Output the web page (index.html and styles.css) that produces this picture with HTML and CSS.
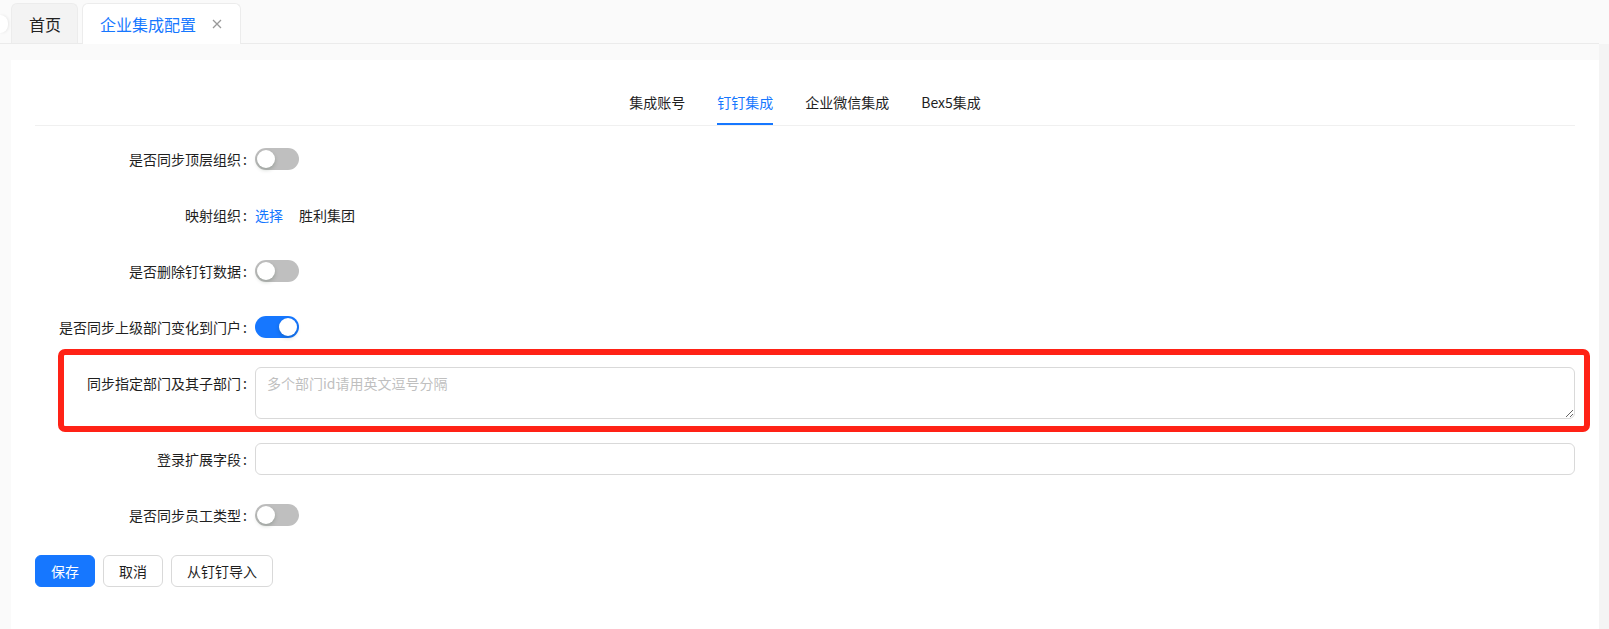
FILE: index.html
```html
<!DOCTYPE html>
<html>
    <head>
        <title>企业集成配置</title>
        <link rel="stylesheet" href="styles.css">
    </head>
    <body>
        <div class="layout">
            <div class="page">
                <div class="tabbar">
                    <span class="scroll-btn"></span>
                    <div class="page-tab">首页</div>
                    <div class="page-tab active">企业集成配置
                        <svg class="close" width="10" height="10" viewBox="0 0 10 10">
                            <path d="M1 1 L9 9 M9 1 L1 9" stroke="#999" stroke-width="1.3" fill="none"/>
                        </svg>
                    </div>
                </div>

                <div class="main">
                    <div class="card">
                        <div class="tabs">
                            <div class="tab">集成账号</div>
                            <div class="tab active">钉钉集成</div>
                            <div class="tab">企业微信集成</div>
                            <div class="tab">Bex5集成</div>
                        </div>

                        <form class="form">
                            <div class="form-item">
                                <label class="form-label">是否同步顶层组织</label>
                                <div class="form-control"><span class="switch"></span></div>
                            </div>
                            <div class="form-item">
                                <label class="form-label">映射组织</label>
                                <div class="form-control">
                                    <a class="link">选择</a>
                                    <span class="org-name">胜利集团</span>
                                </div>
                            </div>
                            <div class="form-item">
                                <label class="form-label">是否删除钉钉数据</label>
                                <div class="form-control"><span class="switch"></span></div>
                            </div>
                            <div class="form-item">
                                <label class="form-label">是否同步上级部门变化到门户</label>
                                <div class="form-control"><span class="switch on"></span></div>
                            </div>
                            <div class="form-item highlight">
                                <label class="form-label">同步指定部门及其子部门</label>
                                <div class="form-control">
                                    <textarea class="textarea" placeholder="多个部门id请用英文逗号分隔"></textarea>
                                </div>
                                <span class="annotation"></span>
                            </div>
                            <div class="form-item">
                                <label class="form-label">登录扩展字段</label>
                                <div class="form-control"><input class="input" type="text"></div>
                            </div>
                            <div class="form-item">
                                <label class="form-label">是否同步员工类型</label>
                                <div class="form-control"><span class="switch"></span></div>
                            </div>
                            <div class="actions">
                                <button type="button" class="btn primary">保存</button>
                                <button type="button" class="btn">取消</button>
                                <button type="button" class="btn">从钉钉导入</button>
                            </div>
                        </form>
                    </div>
                </div>
            </div>
            <div class="scrollbar"></div>
        </div>
    </body>
</html>
```

FILE: styles.css
```css
/* page frame */
body {
    margin: 0;
    height: 100vh;
    overflow: hidden;
    background-color: #fafafa;
    font-family: "Noto Sans CJK SC", "Noto Sans", sans-serif;
    font-size: 14px;
    color: #1f1f1f;
}

.layout {
    display: flex;
    height: 100vh;
}

.page {
    width: 1599px;
    display: flex;
    flex-direction: column;
}

.scrollbar {
    flex: 1;
    margin-top: 44px;
    background-color: #f4f4f4;
}

/* top page tabs */
.tabbar {
    height: 44px;
    box-sizing: border-box;
    padding-top: 3px;
    display: flex;
    align-items: flex-start;
    gap: 4px;
    border-bottom: 1px solid #ebebeb;
}

.scroll-btn {
    width: 8px;
    height: 18px;
    margin-top: 12px;
    margin-right: -1px;
    background-color: #fff;
    border-radius: 0 9px 9px 0;
    box-shadow: 1px 0 3px rgba(0, 0, 0, 0.08);
}

.page-tab {
    height: 40px;
    box-sizing: border-box;
    padding: 0 16px 0 17px;
    display: flex;
    align-items: center;
    font-size: 16px;
    color: #222;
    background-color: #f3f3f3;
    border: 1px solid #ececec;
    border-bottom: none;
    border-radius: 6px 6px 0 0;
}

.page-tab.active {
    background-color: #fff;
    color: #1677ff;
    padding-right: 18px;
    height: 41px;
}

.close {
    margin-left: 16px;
}

/* content card */
.main {
    flex: 1;
    padding: 16px 0 0 11px;
}

.card {
    height: 100%;
    background-color: #fff;
    padding: 19px 24px 0 24px;
}

.tabs {
    display: flex;
    justify-content: center;
    gap: 32px;
    border-bottom: 1px solid #f0f0f0;
    margin-bottom: 17px;
}

.tab {
    padding: 12px 0;
    line-height: 22px;
}

.tab.active {
    color: #1677ff;
    box-shadow: inset 0 -2px 0 #1677ff;
}

/* form */
.form-item {
    display: flex;
    align-items: flex-start;
    margin-bottom: 24px;
}

.form-item.highlight {
    position: relative;
}

.annotation {
    position: absolute;
    left: 23px;
    right: -15px;
    top: -18px;
    bottom: -13px;
    border: 6px solid #ff2216;
    border-radius: 7px;
    pointer-events: none;
}

.form-label {
    width: 220px;
    flex-shrink: 0;
    box-sizing: border-box;
    padding-right: 8px;
    text-align: right;
    line-height: 32px;
    white-space: nowrap;
}

.form-label::after {
    content: ":";
    margin-left: 2px;
}

.form-control {
    flex: 1;
    min-height: 32px;
    display: flex;
    align-items: center;
}

.link {
    color: #1677ff;
    cursor: pointer;
}

.org-name {
    margin-left: 16px;
}

.switch {
    position: relative;
    width: 44px;
    height: 22px;
    border-radius: 11px;
    background-color: #bfbfbf;
}

.switch::after {
    content: "";
    position: absolute;
    top: 2px;
    left: 2px;
    width: 18px;
    height: 18px;
    border-radius: 50%;
    background-color: #fff;
    box-shadow: 0 2px 4px rgba(0, 35, 11, 0.2);
}

.switch.on {
    background-color: #1677ff;
}

.switch.on::after {
    left: 24px;
}

.textarea,
.input {
    width: 100%;
    box-sizing: border-box;
    border: 1px solid #d9d9d9;
    border-radius: 6px;
    padding: 4px 11px;
    font-family: inherit;
    font-size: 14px;
    color: #1f1f1f;
    outline: none;
}

.textarea {
    height: 52px;
    line-height: 22px;
    resize: vertical;
    display: block;
}

.textarea::placeholder {
    color: #bfbfbf;
}

.input {
    height: 32px;
}

/* buttons */
.actions {
    display: flex;
    gap: 8px;
}

.btn {
    height: 32px;
    padding: 0 15px;
    font-family: inherit;
    font-size: 14px;
    color: #1f1f1f;
    background-color: #fff;
    border: 1px solid #d9d9d9;
    border-radius: 6px;
}

.btn.primary {
    color: #fff;
    background-color: #1677ff;
    border-color: #1677ff;
}
```
